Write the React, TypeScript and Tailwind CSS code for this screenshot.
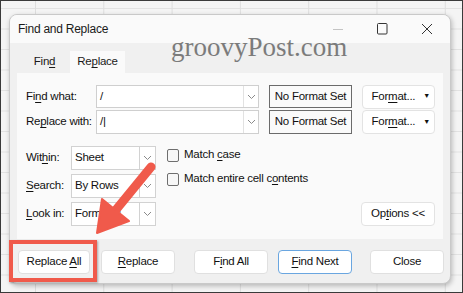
import React from "react"

const Chevron = () => (
  <svg width="9" height="6" viewBox="0 0 9 6" className="text-[#8a8a8a]">
    <polyline points="1,1 4.5,4.5 8,1" fill="none" stroke="currentColor" strokeWidth="1" />
  </svg>
)

const Combo = ({ value, w }: { value: string; w: string }) => (
  <div className={`flex h-[23px] ${w} bg-white border border-[#cfcfcf]`}>
    <div className="flex-1 flex items-center pl-[3px]">{value}</div>
    <div className="w-[15px] flex items-center justify-center border-l border-[#e2e2e2]">
      <Chevron />
    </div>
  </div>
)

const Select = ({ value }: { value: string }) => (
  <div className="flex h-[24px] w-[85px]">
    <div className="w-[69px] flex items-center pl-[3px] bg-white border border-[#d2d2d2] whitespace-nowrap overflow-hidden">{value}</div>
    <div className="w-[17px] -ml-px flex items-center justify-center bg-white border border-[#d2d2d2]">
      <Chevron />
    </div>
  </div>
)

const Check = ({ children }: { children: React.ReactNode }) => (
  <div className="flex items-center gap-[5px] h-[14px]">
    <div className="w-[12px] h-[13px] rounded-[2px] border border-[#6e6e6e] bg-[#f7f7f7]" />
    <span className="whitespace-nowrap">{children}</span>
  </div>
)

const Btn = ({ children, cls }: { children: React.ReactNode; cls: string }) => (
  <div className={`h-[24px] flex items-center justify-center rounded-[4px] bg-white whitespace-nowrap ${cls}`}>
    {children}
  </div>
)

const U = ({ children }: { children: React.ReactNode }) => (
  <span className="underline underline-offset-[2px] decoration-[1px]">{children}</span>
)

export default function App() {
  return (
    <div
      className="relative w-[463px] h-[293px] overflow-hidden border border-[#3a3a3a] bg-[#f4f4f4] font-['Liberation_Sans',Arial,sans-serif] text-[11.5px] tracking-[-0.25px] text-[#111] bg-[image:linear-gradient(to_right,#dedede_1px,transparent_1px),linear-gradient(to_bottom,#e2e2e2_1px,transparent_1px)] bg-[size:68.3px_20.5px] bg-[position:34px_7px]"
    >
      <div className="ml-[8px] mt-[13px] w-[442px] h-[270px] rounded-[8px] border border-[#c9c9c9] bg-[#f0f0f0] shadow-[1px_2px_5px_rgba(0,0,0,0.25)] overflow-hidden flex flex-col">
        {/* title bar */}
        <div className="h-[28px] bg-[#fafafa] flex items-center pl-[8px] text-[12px] text-[#1a1a1a]">
          <span>Find and Replace</span>
          <div className="ml-auto flex items-center">
            <svg width="12" height="12" viewBox="0 0 12 12" className="mr-[32px]">
              <line x1="1" y1="6.5" x2="11" y2="6.5" stroke="#c4c4c4" strokeWidth="1" />
            </svg>
            <svg width="12" height="12" viewBox="0 0 12 12" className="mr-[33px]">
              <rect x="1.5" y="0.5" width="9.5" height="10.5" fill="none" stroke="#333" strokeWidth="1" rx="1" />
            </svg>
            <svg width="12" height="12" viewBox="0 0 12 12" className="mr-[17px]">
              <path d="M1 1 L11 11 M11 1 L1 11" stroke="#333" strokeWidth="1" />
            </svg>
          </div>
        </div>

        {/* tabs */}
        <div className="flex mt-[8px] ml-[7px] h-[22px] text-[#1a1a1a]">
          <div className="w-[53px] flex items-center justify-center pl-[2px]">
            Fin<U>d</U>
          </div>
          <div className="w-[55px] flex items-center justify-center bg-[#fafafa]">
            Re<U>p</U>lace
          </div>
        </div>

        {/* panel */}
        <div className="ml-[7px] w-[426px] h-[166px] bg-[#fafafa] pt-[12px] pl-[9px] pr-[8px] flex flex-col">
          <div className="flex items-center h-[23px]">
            <span className="w-[70px] whitespace-nowrap">Fi<U>n</U>d what:</span>
            <Combo value="/" w="w-[163px]" />
            <div className="ml-[10px] w-[83px] h-[23px] flex items-center justify-center border border-[#6b6b6b] bg-[#fafafa] whitespace-nowrap">
              No Format Set
            </div>
            <Btn cls="ml-[10px] w-[73px] h-[23px] border border-[#e3e3e3] justify-end pr-[4px] gap-[8px]">
              <span>For<U>m</U>at...</span>
              <span className="text-[7px]">▼</span>
            </Btn>
          </div>
          <div className="flex items-center h-[24px] mt-[2px]">
            <span className="w-[70px] whitespace-nowrap">Re<U>p</U>lace with:</span>
            <Combo value="/|" w="w-[163px] h-[24px]" />
            <div className="ml-[10px] w-[83px] h-[24px] flex items-center justify-center border border-[#6b6b6b] bg-[#fafafa] whitespace-nowrap">
              No Format Set
            </div>
            <Btn cls="ml-[10px] w-[73px] border border-[#e3e3e3] justify-end pr-[4px] gap-[8px]">
              <span>For<U>m</U>at...</span>
              <span className="text-[7px]">▼</span>
            </Btn>
          </div>

          <div className="flex mt-[12px]">
            <div className="flex flex-col gap-[4px]">
              <div className="flex items-center">
                <span className="w-[45px]">Wit<U>h</U>in:</span>
                <Select value="Sheet" />
              </div>
              <div className="flex items-center">
                <span className="w-[45px]"><U>S</U>earch:</span>
                <Select value="By Rows" />
              </div>
              <div className="flex items-center">
                <span className="w-[45px] whitespace-nowrap"><U>L</U>ook in:</span>
                <Select value="Formulas" />
              </div>
            </div>
            <div className="ml-[11px] pt-[2px] flex flex-col gap-[10px]">
              <Check>Match <U>c</U>ase</Check>
              <Check>Match entire cell c<U>o</U>ntents</Check>
            </div>
            <Btn cls="ml-auto self-end w-[74px] border border-[#e3e3e3]">
              <span>Op<U>t</U>ions &lt;&lt;</span>
            </Btn>
          </div>
        </div>

        {/* buttons */}
        <div className="flex mt-[11px] ml-[8px]">
          <Btn cls="w-[72px] border border-[#e0e0e0]">
            <span>Replace <U>A</U>ll</span>
          </Btn>
          <Btn cls="ml-[11px] w-[74px] border border-[#e0e0e0]">
            <span><U>R</U>eplace</span>
          </Btn>
          <Btn cls="ml-[19px] w-[74px] border border-[#e0e0e0]">
            <span>F<U>i</U>nd All</span>
          </Btn>
          <Btn cls="ml-[10px] w-[74px] border border-[#6aa6e0]">
            <span><U>F</U>ind Next</span>
          </Btn>
          <Btn cls="ml-[18px] w-[74px] border border-[#e0e0e0]">
            <span>Close</span>
          </Btn>
        </div>
      </div>

      {/* watermark */}
      <div className="absolute left-[170px] top-[33px] font-['Liberation_Serif',serif] text-[27px] leading-none tracking-normal text-[#6f6f6f] opacity-90">
        groovyPost.com
      </div>

      {/* red highlight box */}
      <div className="absolute left-[8px] top-[239px] w-[88px] h-[42px] border-[4px] border-[#f05a4b] shadow-[1px_1px_2px_rgba(0,0,0,0.3)]" />

      {/* arrow */}
      <svg className="absolute left-0 top-0" width="463" height="293" viewBox="0 0 463 293">
        <line x1="150" y1="166" x2="114" y2="210" stroke="#f05a4b" strokeWidth="9" strokeLinecap="round" />
        <polygon points="96,232 101,198 128,220" fill="#f05a4b" stroke="#f05a4b" strokeWidth="2" strokeLinejoin="round" />
      </svg>
    </div>
  )
}
